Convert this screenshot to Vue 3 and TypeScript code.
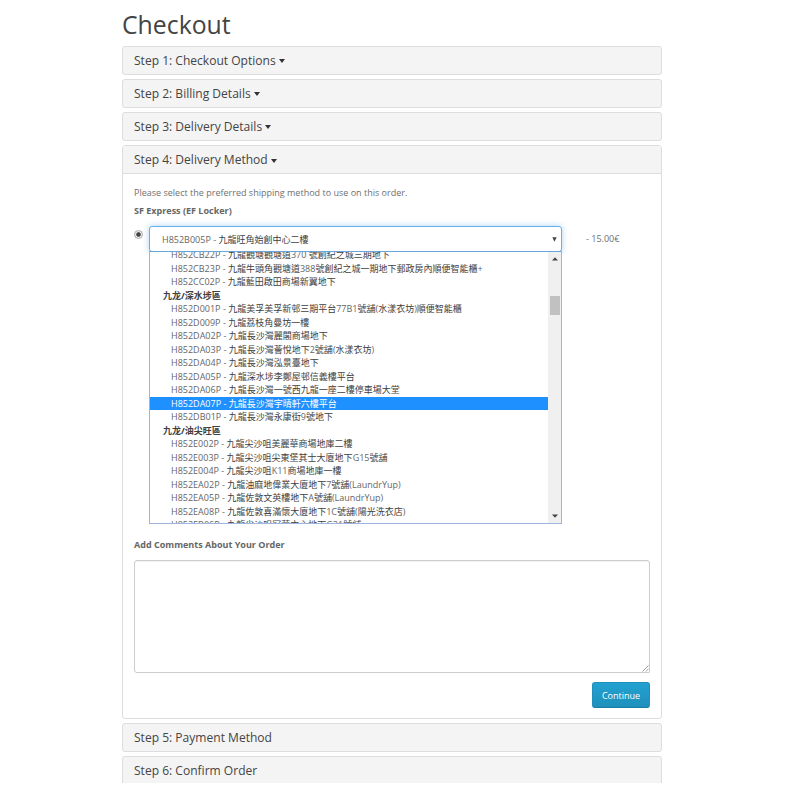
<script setup lang="ts">
interface Row {
  text: string
  code?: string
  active?: boolean
}

interface Run {
  text: string
  cjk: boolean
}

const closedSteps: string[] = [
  'Step 1: Checkout Options',
  'Step 2: Billing Details',
  'Step 3: Delivery Details',
]

const rows: Row[] = [
  { code: 'H852CB22P', text: '九龍觀塘觀塘道370 號創紀之城三期地下' },
  { code: 'H852CB23P', text: '九龍牛頭角觀塘道388號創紀之城一期地下郵政房內順便智能櫃+' },
  { code: 'H852CC02P', text: '九龍藍田啟田商場新翼地下' },
  { text: '九龙/深水埗區' },
  { code: 'H852D001P', text: '九龍美孚美孚新邨三期平台77B1號舖(水漾衣坊)順便智能櫃' },
  { code: 'H852D009P', text: '九龍荔枝角曼坊一樓' },
  { code: 'H852DA02P', text: '九龍長沙灣麗閣商場地下' },
  { code: 'H852DA03P', text: '九龍長沙灣薈悅地下2號舖(水漾衣坊)' },
  { code: 'H852DA04P', text: '九龍長沙灣泓景臺地下' },
  { code: 'H852DA05P', text: '九龍深水埗李鄭屋邨信義樓平台' },
  { code: 'H852DA06P', text: '九龍長沙灣一號西九龍一座二樓停車場大堂' },
  { code: 'H852DA07P', text: '九龍長沙灣宇晴軒六樓平台', active: true },
  { code: 'H852DB01P', text: '九龍長沙灣永康街9號地下' },
  { text: '九龙/油尖旺區' },
  { code: 'H852E002P', text: '九龍尖沙咀美麗華商場地庫二樓' },
  { code: 'H852E003P', text: '九龍尖沙咀尖東堡其士大廈地下G15號舖' },
  { code: 'H852E004P', text: '九龍尖沙咀K11商場地庫一樓' },
  { code: 'H852EA02P', text: '九龍油麻地偉業大廈地下7號舖(LaundrYup)' },
  { code: 'H852EA05P', text: '九龍佐敦文英樓地下A號舖(LaundrYup)' },
  { code: 'H852EA08P', text: '九龍佐敦喜滿懷大廈地下1C號舖(陽光洗衣店)' },
  { code: 'H852EB06P', text: '九龍尖沙咀冠華中心地下G31號舖' },
]

function runs(text: string): Run[] {
  return (text.match(/[\u2e80-\u9fff]+|[^\u2e80-\u9fff]+/g) ?? []).map((t) => ({
    text: t,
    cjk: t.charCodeAt(0) >= 0x2e80,
  }))
}
</script>

<template>
  <main class="page">
    <h1>Checkout</h1>
    <div class="steps">
      <section v-for="s in closedSteps" :key="s" class="panel">
        <h4 class="heading">{{ s }}<i class="caret"></i></h4>
      </section>
      <section class="panel open">
        <h4 class="heading">Step 4: Delivery Method<i class="caret"></i></h4>
        <div class="body">
          <p class="intro">Please select the preferred shipping method to use on this order.</p>
          <p class="carrier">SF Express (EF Locker)</p>
          <div class="method">
            <span class="radio"></span>
            <div class="select">
              <span class="value">H852B005P - <span class="cjk">九龍旺角始創中心二樓</span></span>
              <svg class="arrow" viewBox="0 0 6 6"><path d="M0.4 0.3H5.6L3 5.8Z" fill="#444" /></svg>
              <div class="dropdown">
                <div class="list">
                  <div
                    v-for="(r, i) in rows"
                    :key="i"
                    class="row"
                    :class="{ group: !r.code, active: r.active }"
                  ><template v-if="r.code">{{ r.code }} - </template><span
                      v-for="(t, k) in runs(r.text)"
                      :key="k"
                      :class="{ cjk: t.cjk }"
                    >{{ t.text }}</span></div>
                </div>
                <div class="scrollbar">
                  <svg class="tri" viewBox="0 0 6 4"><path d="M0 3.6L3 0.2L6 3.6Z" fill="#444" /></svg>
                  <div class="track"><div class="thumb"></div></div>
                  <svg class="tri" viewBox="0 0 6 4"><path d="M0 0.4L3 3.8L6 0.4Z" fill="#444" /></svg>
                </div>
              </div>
            </div>
            <span class="price">- 15.00€</span>
          </div>
          <p class="comments-label">Add Comments About Your Order</p>
          <div class="comments">
            <svg class="grip" viewBox="0 0 7 7">
              <path d="M0.5 6.5L6.5 0.5M3.8 6.5L6.5 3.8" stroke="#888" stroke-width="0.8" fill="none" />
            </svg>
          </div>
          <div class="actions"><button type="button">Continue</button></div>
        </div>
      </section>
      <section class="panel"><h4 class="heading">Step 5: Payment Method</h4></section>
      <section class="panel last"><h4 class="heading">Step 6: Confirm Order</h4></section>
    </div>
  </main>
</template>

<style>
body {
  background: #fff;
}
</style>

<style scoped>
* {
  box-sizing: border-box;
}
.page {
  width: 800px;
  height: 800px;
  overflow: hidden;
  padding: 8px 138px 0 122px;
  font-family: "Open Sans", "Noto Sans CJK TC", sans-serif;
  font-size: 9.03px;
  color: #707070;
}
h1 {
  margin: 0;
  height: 38px;
  line-height: 32px;
  font-size: 24.8px;
  font-weight: 400;
  color: #444;
}
.steps {
  display: flex;
  flex-direction: column;
  gap: 4px;
  height: 737px;
  overflow: hidden;
}
.panel {
  flex: none;
  height: 29px;
  border: 1px solid #ddd;
  border-radius: 3px;
  background: #f4f4f4;
}
.heading {
  display: flex;
  align-items: center;
  height: 26px;
  margin: 0;
  padding-left: 11px;
  font-size: 12.05px;
  font-weight: 400;
  color: #444;
}
.caret {
  margin: 2px 0 0 3px;
  border: 3.5px solid transparent;
  border-top: 4px solid #333;
  border-bottom: 0;
}
.open {
  height: 574px;
  background: #fff;
}
.open .heading {
  height: 28px;
  background: #f4f4f4;
  border-bottom: 1px solid #ddd;
}
.body {
  display: flex;
  flex-direction: column;
  padding: 12px 11px 0;
}
.body p {
  margin: 0;
  line-height: 14px;
}
.carrier,
.comments-label {
  font-weight: 700;
  color: #666;
}
.body .carrier {
  margin-top: 4px;
}
.method {
  display: flex;
  height: 26px;
  margin-top: 8px;
}
.radio {
  width: 9px;
  height: 9px;
  margin: 4px 6px 0 0;
  border: 1px solid #aaa;
  border-radius: 50%;
  background: radial-gradient(circle, #444 0 1.8px, #eee 2.8px);
}
.select {
  position: relative;
  display: flex;
  align-items: center;
  justify-content: space-between;
  width: 413px;
  height: 26px;
  padding: 0 4px 0 12px;
  border: 1px solid #66afe9;
  border-radius: 3px;
  background: #fff;
  box-shadow: 0 0 6px rgba(102, 175, 233, 0.55);
  color: #666;
}
.value {
  white-space: pre;
}
.cjk {
  font-size: 9px;
  color: #404040;
}
.arrow {
  width: 5px;
  height: 5px;
}
.dropdown {
  position: absolute;
  top: 24px;
  left: -1px;
  display: flex;
  width: 413px;
  height: 273px;
  border: 1px solid #9fb4de;
  border-top-color: #66a6dd;
  background: #fff;
  overflow: hidden;
}
.list {
  flex: 1;
  overflow: hidden;
}
.row {
  height: 13.5px;
  padding-left: 21px;
  line-height: 13.5px;
  white-space: pre;
  color: #666;
}
.row:first-child {
  margin-top: -4px;
}
.row.group {
  padding-left: 13px;
  font-weight: 700;
  color: #333;
}
.row.active {
  background: #1e90ff;
  color: #fff;
}
.row.active .cjk {
  color: #fff;
}
.scrollbar {
  display: flex;
  flex-direction: column;
  align-items: center;
  justify-content: space-between;
  width: 13px;
  padding: 5px 0;
  background: #f0f0f0;
}
.tri {
  width: 6px;
  height: 4px;
}
.track {
  flex: 1;
  width: 10px;
  padding-top: 35px;
}
.thumb {
  height: 19px;
  background: #c1c1c1;
}
.price {
  margin-left: 24px;
  line-height: 26px;
}
.body .comments-label {
  margin-top: 286px;
}
.comments {
  display: flex;
  align-items: flex-end;
  justify-content: flex-end;
  height: 113px;
  margin-top: 8px;
  border: 1px solid #ccc;
  border-radius: 3px 3px 1px 3px;
  box-shadow: inset 0 1px 1px rgba(0, 0, 0, 0.06);
}
.grip {
  width: 7px;
  height: 7px;
}
.actions {
  display: flex;
  justify-content: flex-end;
  margin-top: 9px;
}
button {
  width: 58px;
  height: 26px;
  padding: 0;
  border: 1px solid #1f90bb;
  border-bottom-color: #1a7da3;
  border-radius: 3px;
  background: linear-gradient(#23a1d1, #1f90bb);
  font: inherit;
  color: #fff;
}
.last {
  height: 40px;
}
</style>
